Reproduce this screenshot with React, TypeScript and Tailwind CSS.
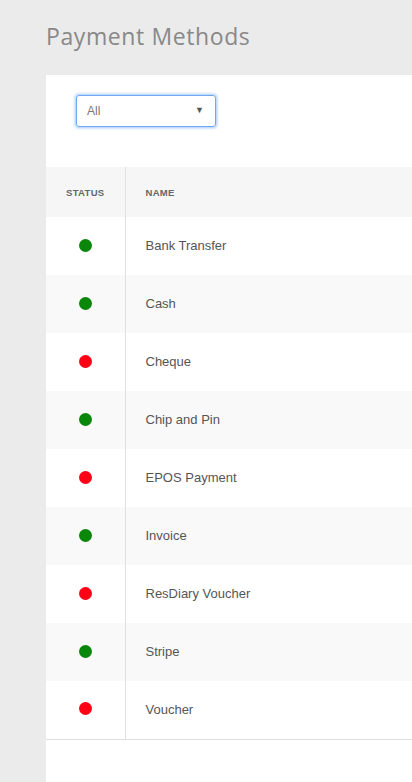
const methods: { name: string; active: boolean }[] = [
  { name: 'Bank Transfer', active: true },
  { name: 'Cash', active: true },
  { name: 'Cheque', active: false },
  { name: 'Chip and Pin', active: true },
  { name: 'EPOS Payment', active: false },
  { name: 'Invoice', active: true },
  { name: 'ResDiary Voucher', active: false },
  { name: 'Stripe', active: true },
  { name: 'Voucher', active: false },
];

export default function App() {
  return (
    <div className="min-h-[782px] bg-[#ebebeb] pl-[46px] flex flex-col font-['Liberation_Sans',Arial,sans-serif]">
      <h1 className="h-[75px] pt-[20px] text-[23px] leading-[32px] text-[#888] font-['Open_Sans',sans-serif] tracking-[0.6px]">
        Payment Methods
      </h1>
      <div className="flex-1 bg-white">
        <div className="pt-[20px] pl-[30px] h-[92px]">
          <div className="w-[140px] h-[32px] rounded-[3px] border border-[#6fa8f0] shadow-[0_0_3px_1px_rgba(100,160,240,0.6)] flex items-center justify-between pl-[10px] pr-[11px] text-[12px] text-[#777]">
            <span>All</span>
            <span className="text-[9px] text-[#555]">▼</span>
          </div>
        </div>
        <table className="w-full border-collapse">
          <thead>
            <tr className="h-[50px] bg-[#f6f6f6]">
              <th className="w-[79px] border-r border-[#e0e0e0] pt-[2px] text-[9.5px] font-bold text-[#666] text-center tracking-[0.3px]">STATUS</th>
              <th className="text-left pl-[20px] pt-[2px] text-[9.5px] font-bold text-[#666] tracking-[0.3px]">NAME</th>
            </tr>
          </thead>
          <tbody>
            {methods.map((m, i) => (
              <tr key={m.name} className={`h-[58px] ${i % 2 === 1 ? 'bg-[#f9f9f9]' : 'bg-white'} ${i === methods.length - 1 ? 'border-b border-[#e0e0e0]' : ''}`}>
                <td className="w-[79px] border-r border-[#e0e0e0]">
                  <div className="flex justify-center pb-[2px]">
                    <div className={`w-[13px] h-[13px] rounded-full ${m.active ? 'bg-[#0a870a]' : 'bg-[#ff0017]'}`} />
                  </div>
                </td>
                <td className="pl-[20px] text-[13px] text-[#555]">{m.name}</td>
              </tr>
            ))}
          </tbody>
        </table>
      </div>
    </div>
  );
}
